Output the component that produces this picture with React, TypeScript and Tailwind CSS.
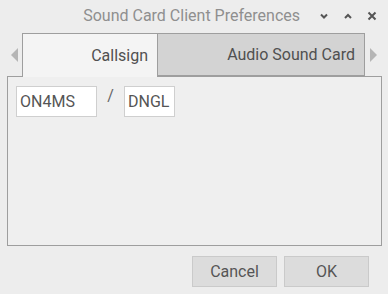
import React from 'react';

const font = { fontFamily: 'Roboto, "Noto Sans", sans-serif' };

function Chevron({ up }: { up?: boolean }) {
    return (
        <svg width="10" height="10" viewBox="0 0 10 10" className="text-[#555]">
            <path d={up ? 'M2 7 L5 4 L8 7' : 'M2 3.5 L5 6.5 L8 3.5'} fill="none" stroke="currentColor" strokeWidth="2" />
        </svg>
    );
}

export default function App() {
    return (
        <div className="w-[388px] h-[294px] bg-[#ededed] flex flex-col overflow-hidden" style={font}>
            {/* Title bar */}
            <div className="h-[31px] flex items-center shrink-0">
                <div className="flex-1 text-right pr-[19px] text-[16px] text-[#8f8f8f]">Sound Card Client Preferences</div>
                <div className="flex items-center gap-[14px] pr-[11px]">
                    <Chevron />
                    <Chevron up />
                    <svg width="10" height="10" viewBox="0 0 10 10" className="text-[#555]">
                        <path d="M1.5 1.5 L8.5 8.5 M8.5 1.5 L1.5 8.5" stroke="currentColor" strokeWidth="2" />
                    </svg>
                </div>
            </div>

            {/* Tabs */}
            <div className="flex items-stretch h-[44px] mt-[2px] px-[7px] -mb-px relative z-10">
                <div className="w-[15px] flex items-center justify-center">
                    <svg width="8" height="14" viewBox="0 0 8 14"><path d="M7 0 L0 7 L7 14 Z" fill="#b5b5b5" /></svg>
                </div>
                <div className="w-[136px] bg-[#f4f4f4] border border-b-0 border-[#9e9e9e] flex items-center justify-end pr-[9px] text-[16px] text-[#505050]">
                    Callsign
                </div>
                <div className="w-[207px] h-[43px] bg-[#d3d3d3] border border-l-0 border-[#9e9e9e] flex items-center justify-end pr-[9px] text-[16px] text-[#505050]">
                    Audio Sound Card
                </div>
                <div className="flex-1 flex items-center justify-center">
                    <svg width="8" height="14" viewBox="0 0 8 14"><path d="M1 0 L8 7 L1 14 Z" fill="#b5b5b5" /></svg>
                </div>
            </div>

            {/* Panel */}
            <div className="ml-[7px] mr-[6px] h-[170px] border border-[#9e9e9e] bg-[#efefef] pt-[9px] pl-[8px]">
                <div className="flex items-center">
                    <div className="w-[81px] h-[31px] bg-white border border-[#cfcfcf] flex items-center pl-[3px] text-[16px] text-[#555]">ON4MS</div>
                    <div className="w-[27px] text-center text-[16px] text-[#666] -mt-[12px]">/</div>
                    <div className="w-[51px] h-[31px] bg-white border border-[#cfcfcf] flex items-center pl-[3px] text-[16px] text-[#555]">DNGL</div>
                </div>
            </div>

            {/* Buttons */}
            <div className="flex justify-end gap-[7px] pr-[19px] mt-[10px]">
                <div className="w-[85px] h-[31px] bg-[#dcdcdc] border border-[#cacaca] flex items-center justify-center text-[16px] text-[#555]">Cancel</div>
                <div className="w-[85px] h-[31px] bg-[#dcdcdc] border border-[#cacaca] flex items-center justify-center text-[16px] text-[#555]">OK</div>
            </div>
        </div>
    );
}
